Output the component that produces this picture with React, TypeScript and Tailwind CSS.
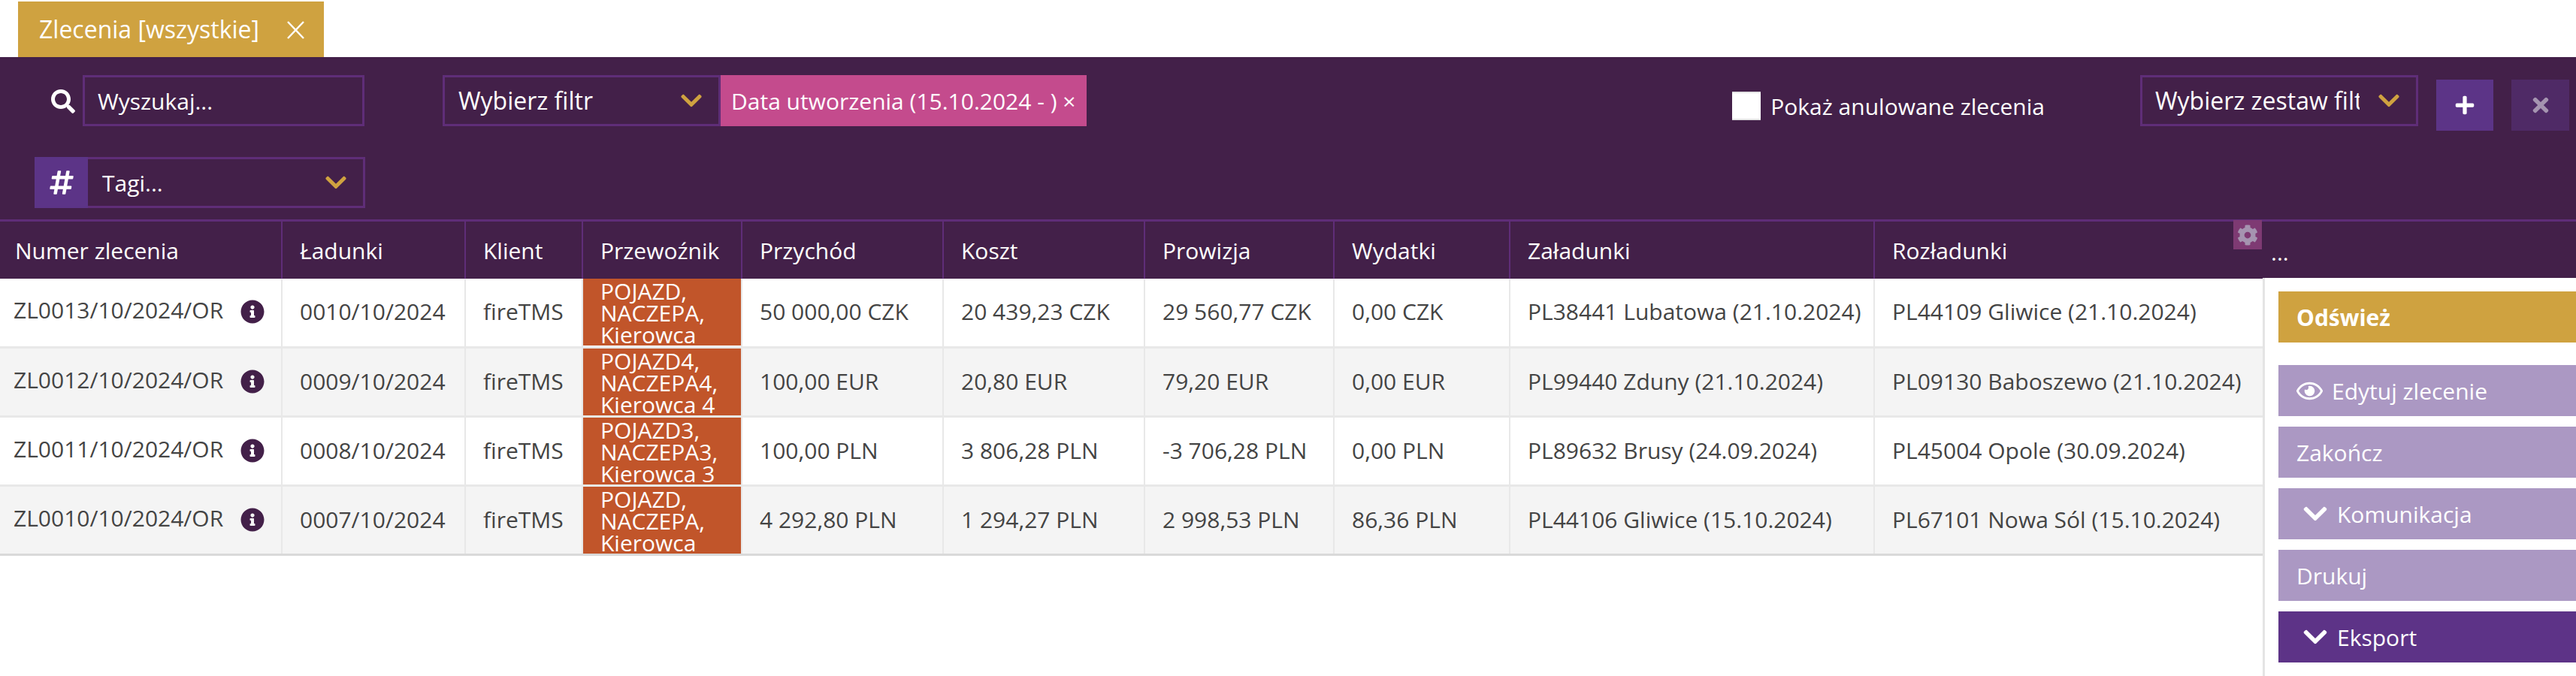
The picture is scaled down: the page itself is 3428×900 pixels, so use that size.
import { FaChevronDown, FaCog, FaHashtag, FaInfoCircle, FaPlus, FaRegEye, FaSearch, FaTimes } from "react-icons/fa";

const columns = [
  { label: "Numer zlecenia", width: "w-[375px]" },
  { label: "Ładunki", width: "w-[244px]" },
  { label: "Klient", width: "w-[156px]" },
  { label: "Przewoźnik", width: "w-[212px]" },
  { label: "Przychód", width: "w-[268px]" },
  { label: "Koszt", width: "w-[268px]" },
  { label: "Prowizja", width: "w-[252px]" },
  { label: "Wydatki", width: "w-[234px]" },
  { label: "Załadunki", width: "w-[485px]" },
  { label: "Rozładunki", width: "w-[517px]" },
];

const rows = [
  ["ZL0013/10/2024/OR", "0010/10/2024", "fireTMS", "POJAZD, NACZEPA, Kierowca", "50 000,00 CZK", "20 439,23 CZK", "29 560,77 CZK", "0,00 CZK", "PL38441 Lubatowa (21.10.2024)", "PL44109 Gliwice (21.10.2024)"],
  ["ZL0012/10/2024/OR", "0009/10/2024", "fireTMS", "POJAZD4, NACZEPA4, Kierowca 4", "100,00 EUR", "20,80 EUR", "79,20 EUR", "0,00 EUR", "PL99440 Zduny (21.10.2024)", "PL09130 Baboszewo (21.10.2024)"],
  ["ZL0011/10/2024/OR", "0008/10/2024", "fireTMS", "POJAZD3, NACZEPA3, Kierowca 3", "100,00 PLN", "3 806,28 PLN", "-3 706,28 PLN", "0,00 PLN", "PL89632 Brusy (24.09.2024)", "PL45004 Opole (30.09.2024)"],
  ["ZL0010/10/2024/OR", "0007/10/2024", "fireTMS", "POJAZD, NACZEPA, Kierowca", "4 292,80 PLN", "1 294,27 PLN", "2 998,53 PLN", "86,36 PLN", "PL44106 Gliwice (15.10.2024)", "PL67101 Nowa Sól (15.10.2024)"],
];

const box = "flex h-[68px] items-center border-[3px] border-[#5f2d78]";
const sideBtn = "flex h-[68px] items-center pl-[24px] text-white";

function Chevron() {
  return <FaChevronDown className="text-[32px] text-[#cfa240]" />;
}

export default function App() {
  return (
    <div className="w-[3428px] bg-white font-['Open_Sans',sans-serif] text-[30px] text-[#444]">
      <div className="flex h-[76px] items-end pl-[24px]">
        <div className="flex h-[74px] w-[407px] items-center bg-[#cfa240] pl-[28px] text-[32px] text-white">
          Zlecenia [wszystkie]
          <svg className="ml-[37px] mt-[2px]" width="23" height="24" viewBox="0 0 23 24" stroke="currentColor" strokeWidth="2.5">
            <path d="M1 1 L22 23 M22 1 L1 23" fill="none" />
          </svg>
        </div>
      </div>

      {/* filters */}
      <div className="h-[216px] bg-[#432049] pt-[24px] text-white">
        <div className="flex items-start">
          <FaSearch className="ml-[68px] mt-[19px] text-[32px]" />
          <div className={`${box} ml-[10px] w-[375px] pl-[17px]`}>Wyszukaj...</div>
          <div className={`${box} ml-[104px] w-[370px] justify-between pl-[18px] pr-[20px] text-[32px]`}>
            Wybierz filtr
            <Chevron />
          </div>
          <div className="flex h-[68px] w-[487px] items-center bg-[#c44b8d] pl-[14px] whitespace-nowrap">
            Data utworzenia (15.10.2024 - ) ×
          </div>
          <div className="ml-auto mt-[7px] flex h-[68px] items-center pl-[2px]">
            <div className="h-[38px] w-[38px] border-y-2 border-[#e4e4e4] bg-white" />
            <div className="ml-[13px]">Pokaż anulowane zlecenia</div>
          </div>
          <div className={`${box} ml-[127px] w-[370px] pl-[17px] text-[32px]`}>
            <span className="mr-[23px] w-[272px] shrink-0 overflow-hidden whitespace-nowrap">Wybierz zestaw filtrów</span>
            <Chevron />
          </div>
          <div className="ml-[24px] mt-[6px] flex h-[68px] w-[76px] items-center justify-center bg-[#5c3487]">
            <FaPlus className="text-[28px]" />
          </div>
          <div className="ml-[24px] mr-[9px] mt-[6px] flex h-[68px] w-[77px] items-center justify-center bg-[#4f2a66]">
            <FaTimes className="text-[30px] text-[#a594b0]" />
          </div>
        </div>
        <div className="ml-[46px] mt-[34px] flex h-[68px] w-[440px]">
          <div className="flex w-[71px] items-center justify-center bg-[#5c3487]">
            <FaHashtag className="text-[36px]" />
          </div>
          <div className={`${box} flex-1 justify-between border-l-0 pl-[19px] pr-[20px]`}>
            Tagi...
            <Chevron />
          </div>
        </div>
      </div>

      <div className="flex items-start">
        <div className="relative w-[3011px]">
          <table className="w-[3011px] table-fixed border-collapse">
            <colgroup>
              {columns.map((c) => (
                <col key={c.label} className={c.width} />
              ))}
            </colgroup>
            <thead>
              <tr className="h-[77px] border-t-[3px] border-[#5f2d78] bg-[#432049] text-white">
                {columns.map((c) => (
                  <th
                    key={c.label}
                    className="border-l-[2px] border-[#5f2d78] pl-[23px] pt-[2px] text-left font-normal first:border-l-0 first:pl-[20px]"
                  >
                    {c.label}
                  </th>
                ))}
              </tr>
            </thead>
            <tbody>
              {rows.map((r, idx) => (
                <tr key={r[0]} className={`h-[92px] border-b-[3px] ${idx === 3 ? "border-[#d9d9d9]" : "border-[#e8e8e8]"} ${idx % 2 ? "bg-[#f4f4f4]" : "bg-white"}`}>
                  {r.map((cell, i) =>
                    i === 0 ? (
                      <td key={i} className="pl-[18px] align-middle">
                        <div className="flex items-center">
                          <span className="-mt-[6px] whitespace-nowrap">{cell}</span>
                          <FaInfoCircle className="ml-[23px] -mt-[2px] text-[32px] text-[#432049]" />
                        </div>
                      </td>
                    ) : i === 3 ? (
                      <td key={i} className="border-l-[2px] border-[#e8e8e8] p-0">
                        <div className="h-[89px] bg-[#c1552a] pl-[23px] pt-[2px] leading-[29px] text-white">
                          {cell}
                        </div>
                      </td>
                    ) : (
                      <td key={i} className="border-l-[2px] border-[#e8e8e8] pb-[2px] pl-[23px] align-middle whitespace-nowrap">
                        {cell}
                      </td>
                    ),
                  )}
                </tr>
              ))}
            </tbody>
          </table>
          <div className="absolute right-[1px] top-[1px] flex h-[39px] w-[38px] items-center justify-center bg-[#7e3a73]">
            <FaCog className="text-[28px] text-[#a594b0]" />
          </div>
        </div>

        <aside className="flex-1">
          <div className="flex h-[78px] items-end border-t-[3px] border-[#5f2d78] bg-[#432049] pb-[12px] pl-[11px] text-white">
            ...
          </div>
          <div className="h-[530px] border-l-[3px] border-[#e4e4e4] pl-[18px] pt-[18px]">
            <div className="flex h-[68px] items-center bg-[#cfa240] pl-[24px] font-bold text-white">Odśwież</div>
            <div className="mt-[30px] flex flex-col gap-[14px]">
              <div className={`${sideBtn} bg-[#ab98c3]`}>
                <FaRegEye className="mr-[12px] text-[35px]" />
                Edytuj zlecenie
              </div>
              <div className={`${sideBtn} bg-[#ab98c3]`}>Zakończ</div>
              <div className={`${sideBtn} bg-[#ab98c3]`}>
                <FaChevronDown className="ml-[7px] mr-[11px] text-[36px]" />
                Komunikacja
              </div>
              <div className={`${sideBtn} bg-[#ab98c3]`}>Drukuj</div>
              <div className={`${sideBtn} bg-[#5d3387]`}>
                <FaChevronDown className="ml-[7px] mr-[11px] text-[36px]" />
                Eksport
              </div>
            </div>
          </div>
        </aside>
      </div>
    </div>
  );
}
